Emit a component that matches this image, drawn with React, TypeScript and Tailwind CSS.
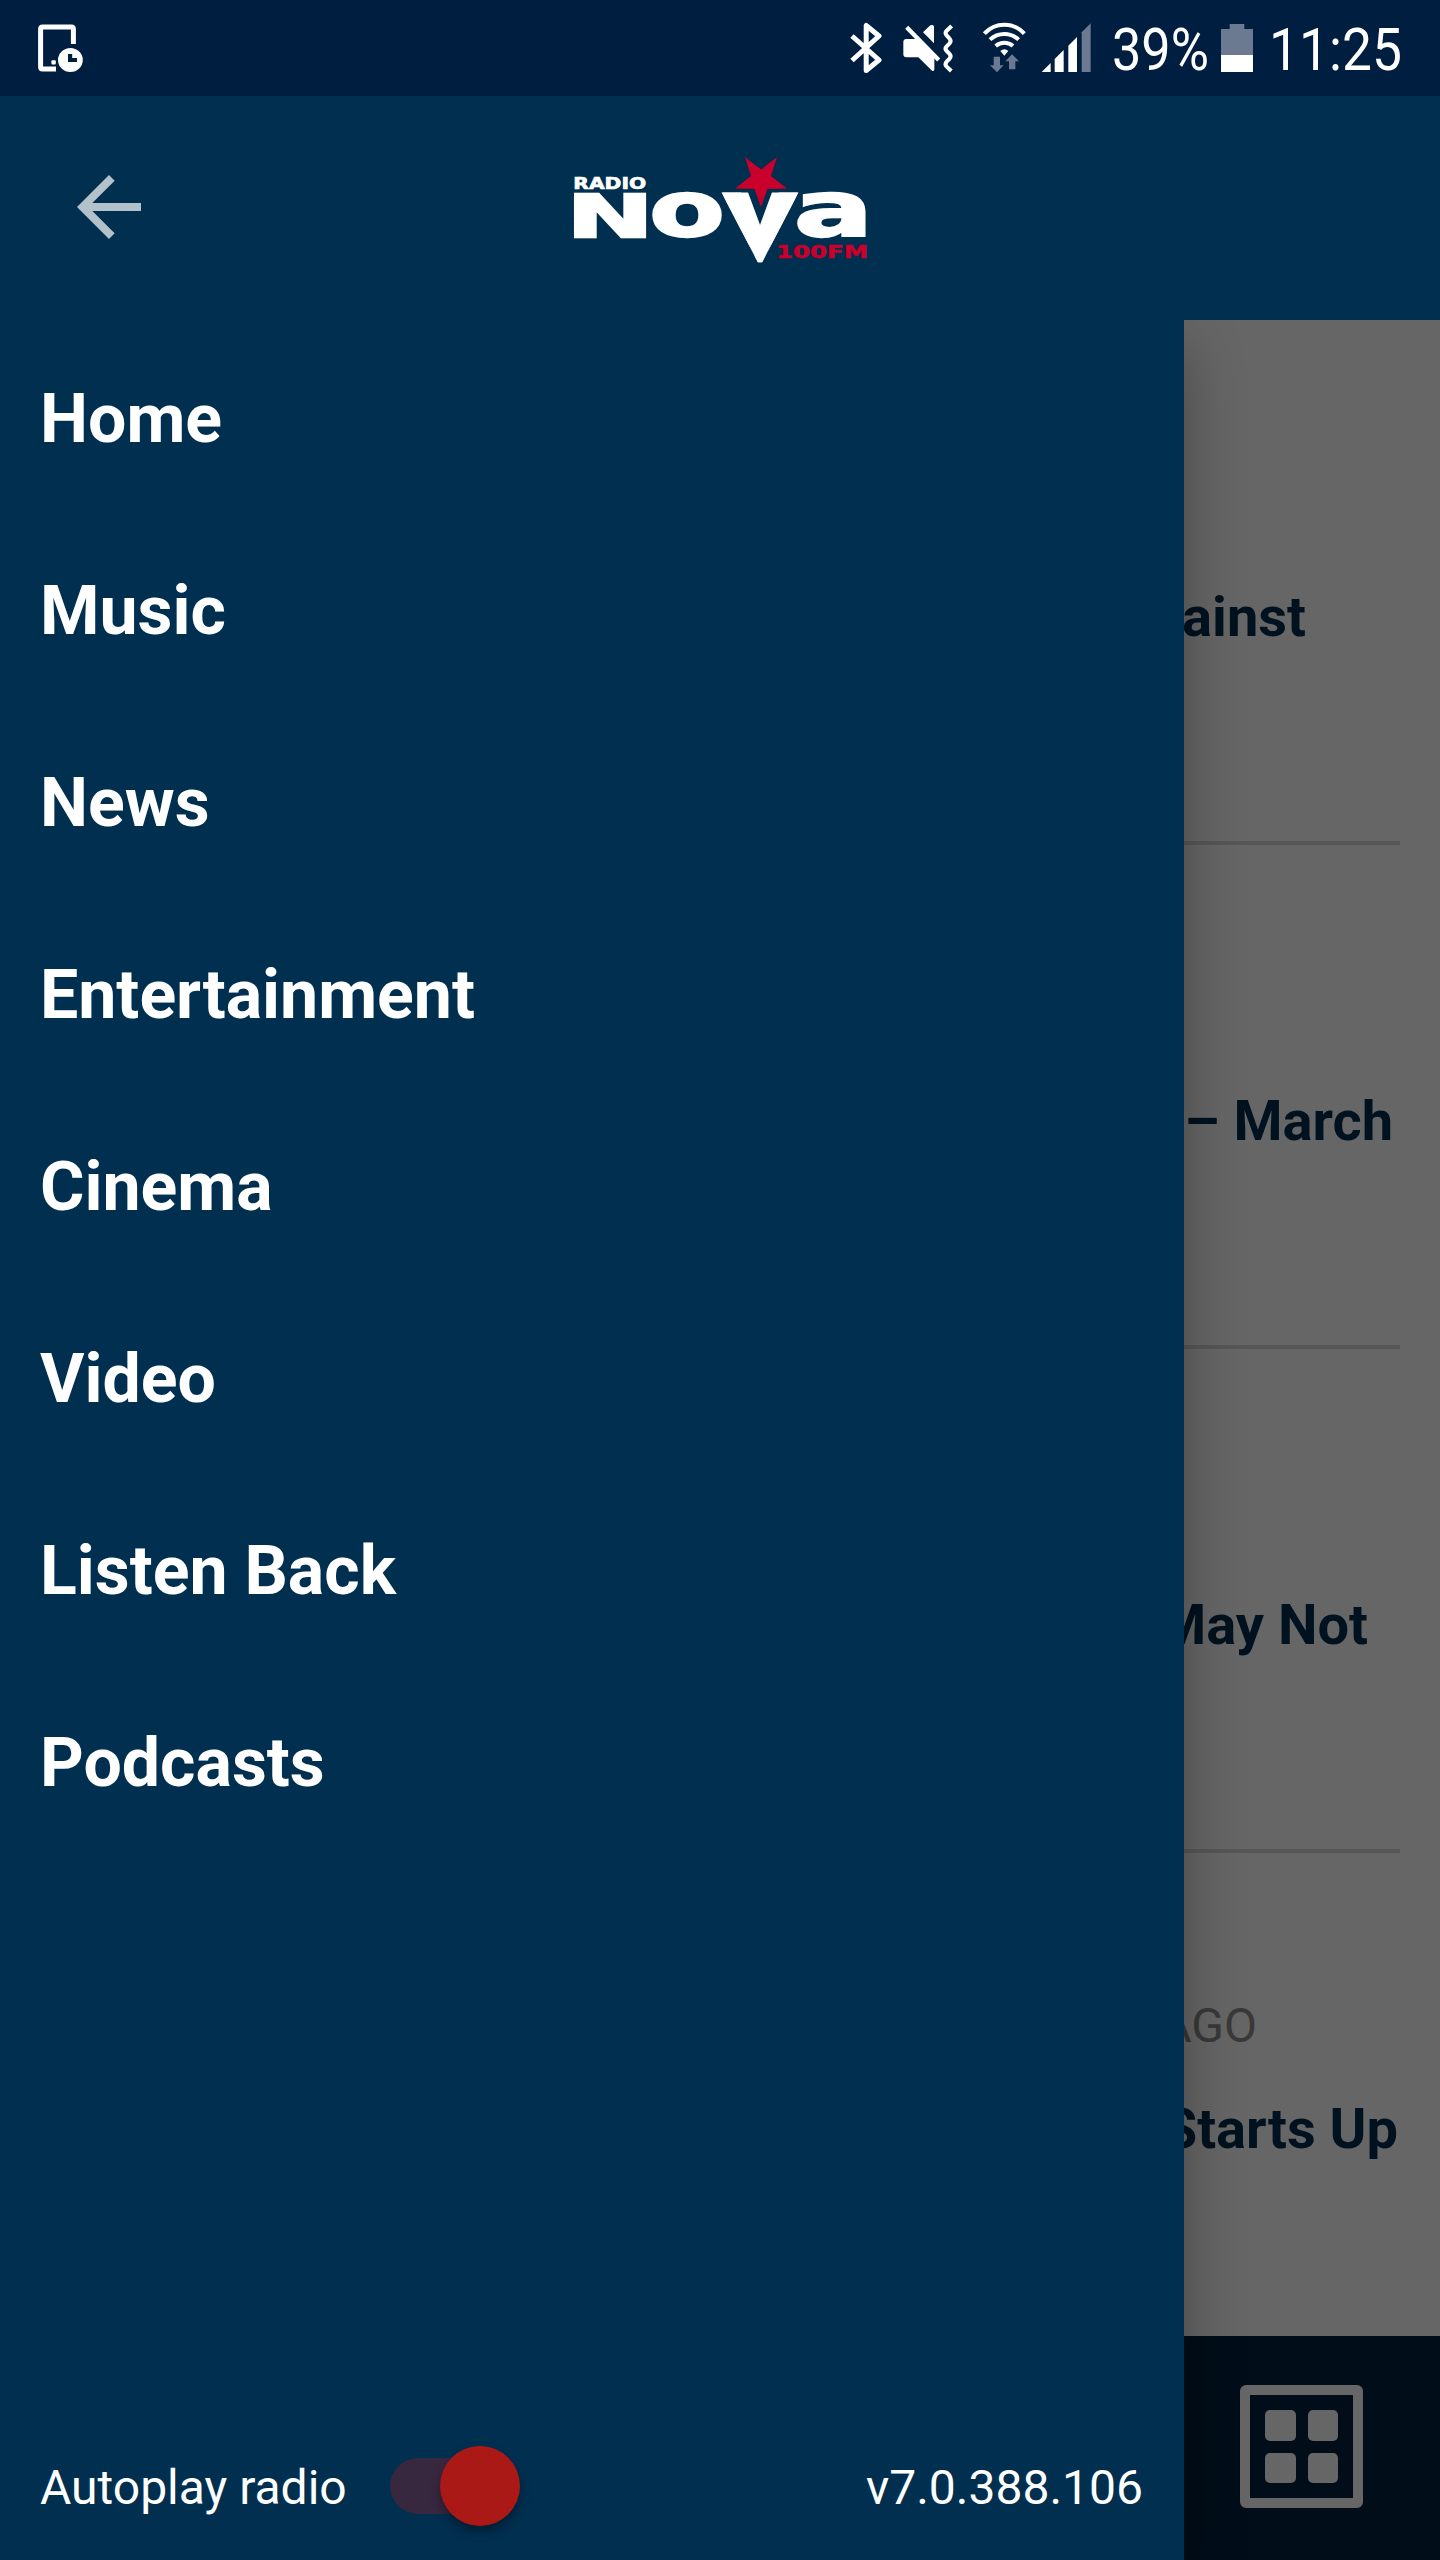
import React from "react";

const menu = ["Home", "Music", "News", "Entertainment", "Cinema", "Video", "Listen Back", "Podcasts"];

function StatusBar() {
  return (
    <div className="flex h-24 items-start bg-[#001e40] text-white">
      <svg className="ml-[38px] mt-6 h-12 w-[46px]" viewBox="0 0 46 48">
        <path d="M35.4 20V5q0-2-2-2H4.6q-2 0-2 2v38q0 2 2 2H18" fill="none" stroke="#fff" strokeWidth="5" />
        <rect x="13.4" y="36.2" width="4.4" height="4.4" rx="1" fill="#fff" />
        <path fillRule="evenodd" d="M20 36a12.4 12 0 1 0 24.8 0a12.4 12 0 1 0 -24.8 0zM30 30h4.2v4h4.8v4h-9z" fill="#fff" />
      </svg>
      <svg className="ml-[765px] mt-[22px] h-[52px] w-[34px]" viewBox="0 0 34 52">
        <path d="M3 38.5L30 14L17.2 3.5V48.5L30 38L3 14" fill="none" stroke="#fff" strokeWidth="5" strokeLinejoin="round" />
      </svg>
      <svg className="ml-[19px] mt-[22px] h-[51px] w-[53px]" viewBox="216 66 159 153">
        <path d="M229 117H262L313 166V208q0 7-7 4L265 172H229q-9 0-9-9V126q0-9 9-9z" fill="#fff" />
        <path d="M227 78L332 183" stroke="#001e40" strokeWidth="20" transform="translate(7 -7)" />
        <path d="M230 82L326 180" stroke="#fff" strokeWidth="13" />
        <path d="M279 97L301 76q11-4 11 4V130z" fill="#fff" />
        <path d="M365 78L350 92Q343 99 350 106L358 115Q366 123 358 131L350 139Q343 146 350 153L358 161Q366 169 358 177L350 185Q343 193 350 200L364 213" fill="none" stroke="#fff" strokeWidth="12" />
      </svg>
      <svg className="ml-[27px] mt-[21px] h-[52px] w-[45px]" viewBox="456 63 135 156">
        <g fill="none" stroke="#fff" strokeWidth="12">
          <path d="M463 101A80 80 0 0 1 583 101" />
          <path d="M480 119A62 62 0 0 1 566 119" />
          <path d="M497 138A40 40 0 0 1 549 138" />
        </g>
        <path d="M511 153Q523 142 535 153L523 167z" fill="#fff" />
        <path d="M491 170h19v26h11l-20 21l-21-21h11zM537 208v-24h-11l20-21l21 21h-11v24z" fill="#6b7a90" />
      </svg>
      <svg className="ml-[14px] mt-[23px] h-[49px] w-[50px]" viewBox="634 69 150 147">
        <path d="M636 216L663 189V216zM675 177L702 150V216H675zM716 137L742 111V216H716z" fill="#fff" />
        <path d="M756 97L783 70V216H756z" fill="#6b7a90" />
      </svg>
      <span className="ml-[21px] mt-[14px] w-[100px] origin-left scale-x-[0.87] whitespace-nowrap text-[60px] leading-[72px]">39%</span>
      <svg className="ml-[9px] mt-6 h-12 w-8" viewBox="0 0 32 48">
        <path d="M0 5H8.7V0H23.3V5H32V48H0z" fill="#6b7a90" />
        <path d="M0 31H32V48H0z" fill="#fff" />
      </svg>
      <span className="ml-[16px] mt-[14px] origin-left scale-x-[0.89] whitespace-nowrap text-[60px] leading-[72px]">11:25</span>
    </div>
  );
}

function Logo() {
  return (
    <svg
      className="h-[120px] w-[310px]"
      viewBox="565 150 310 120"
      fontFamily="'DejaVu Sans', sans-serif"
      fontWeight="700"
      fontSize="100"
      fill="#fff"
    >
      <clipPath id="wedge">
        <path d="M721.5 192.5H798.5L762 262.5H758z" />
      </clipPath>
      <text transform="translate(573.3 189) scale(.163 .152)" textLength="447" lengthAdjust="spacingAndGlyphs" stroke="#fff" strokeWidth="4">RADIO</text>
      <g stroke="#fff">
        <text transform="translate(566.6 237) scale(1.04 .59)" strokeWidth="4">N</text>
        <text transform="translate(649.2 236) scale(1.1 .76)" strokeWidth="3">o</text>
        <g clipPath="url(#wedge)">
          <text transform="translate(721.5 262) scale(.995 .953)" strokeWidth="13">V</text>
        </g>
        <text transform="translate(794 236) scale(1.17 .76)" strokeWidth="3">a</text>
      </g>
      <g fill="#c8002b">
        <path d="M745 157L761 169.5L777 157L771 176L787 188.5L767.5 189L761 207L754.5 189L735 188.5L751 176z" />
        <text transform="translate(776 257.5) scale(.22 .185)" textLength="418" lengthAdjust="spacingAndGlyphs" stroke="#c8002b" strokeWidth="3">100FM</text>
      </g>
    </svg>
  );
}

function Header() {
  return (
    <header className="flex h-56 bg-[#002f50]">
      <svg className="ml-[61px] mt-[63px] h-24 w-24" viewBox="0 0 24 24" fill="#b3c1cb">
        <path d="M20 11H7.83l5.59-5.59L12 4l-8 8 8 8 1.41-1.41L7.83 13H20v-2z" />
      </svg>
      <div className="ml-[408px] mt-[54px]">
        <Logo />
      </div>
    </header>
  );
}

function Story({ title, inset, meta }: { title: string; inset: string; meta?: string }) {
  return (
    <article className="mr-10 flex h-[504px] flex-col items-end border-b-4 border-[#575757]">
      <p className="mr-[143px] mt-[145px] h-14 text-[48px] leading-[56px] text-[#393939]">{meta}</p>
      <h2 className={"mt-[39px] whitespace-nowrap text-[56px] font-bold leading-[72px] text-[#00121f] " + inset}>{title}</h2>
    </article>
  );
}

function Feed() {
  return (
    <main className="flex h-full flex-col bg-[#666666]">
      <div className="h-[2016px] overflow-hidden pt-[21px]">
        <Story title="ainst" inset="mr-[94px]" />
        <Story title="– March" inset="mr-[7px]" />
        <Story title="May Not" inset="mr-[32px]" />
        <Story title="Starts Up" inset="mr-[2px]" meta="AGO" />
      </div>
      <nav className="flex flex-1 items-start justify-end bg-[#010d18] pr-[77px] pt-[49px]">
        <div className="grid h-[123px] w-[123px] grid-cols-2 content-start gap-x-[12px] gap-y-[12px] rounded-[6px] border-[10px] border-[#666666] p-[15px]">
          {[0, 1, 2, 3].map((i) => (
            <i key={i} className="h-[30.5px] w-[30.5px] rounded-[5px] bg-[#666666]" />
          ))}
        </div>
      </nav>
    </main>
  );
}

function Drawer() {
  return (
    <aside className="absolute inset-y-0 left-0 flex w-[1184px] flex-col bg-[#002f50] text-white shadow-[0_24px_56px_rgba(0,0,0,0.3)]">
      <ul className="pt-[3px]">
        {menu.map((m) => (
          <li key={m} className="flex h-48 items-center pl-10 text-[68px] font-bold">
            {m}
          </li>
        ))}
      </ul>
      <div className="mb-[34px] mt-auto flex h-20 items-center pl-10 pr-[41px] text-[48px]">
        <span className="pt-[3px]">Autoplay radio</span>
        <div className="ml-auto mr-[346px] flex h-20 w-[130px] items-center">
          <div className="flex h-14 w-[120px] items-center rounded-full bg-[#37283f] pl-[50px]">
            <div className="h-20 w-20 shrink-0 rounded-full bg-[#ab1917] shadow-[0_6px_10px_rgba(0,0,0,0.35)]" />
          </div>
        </div>
        <span className="pt-[3px]">v7.0.388.106</span>
      </div>
    </aside>
  );
}

export default function App() {
  return (
    <div className="flex h-[2560px] w-[1440px] flex-col overflow-hidden font-['Roboto',sans-serif]">
      <StatusBar />
      <Header />
      <div className="relative h-[2240px] overflow-hidden">
        <Feed />
        <Drawer />
      </div>
    </div>
  );
}
